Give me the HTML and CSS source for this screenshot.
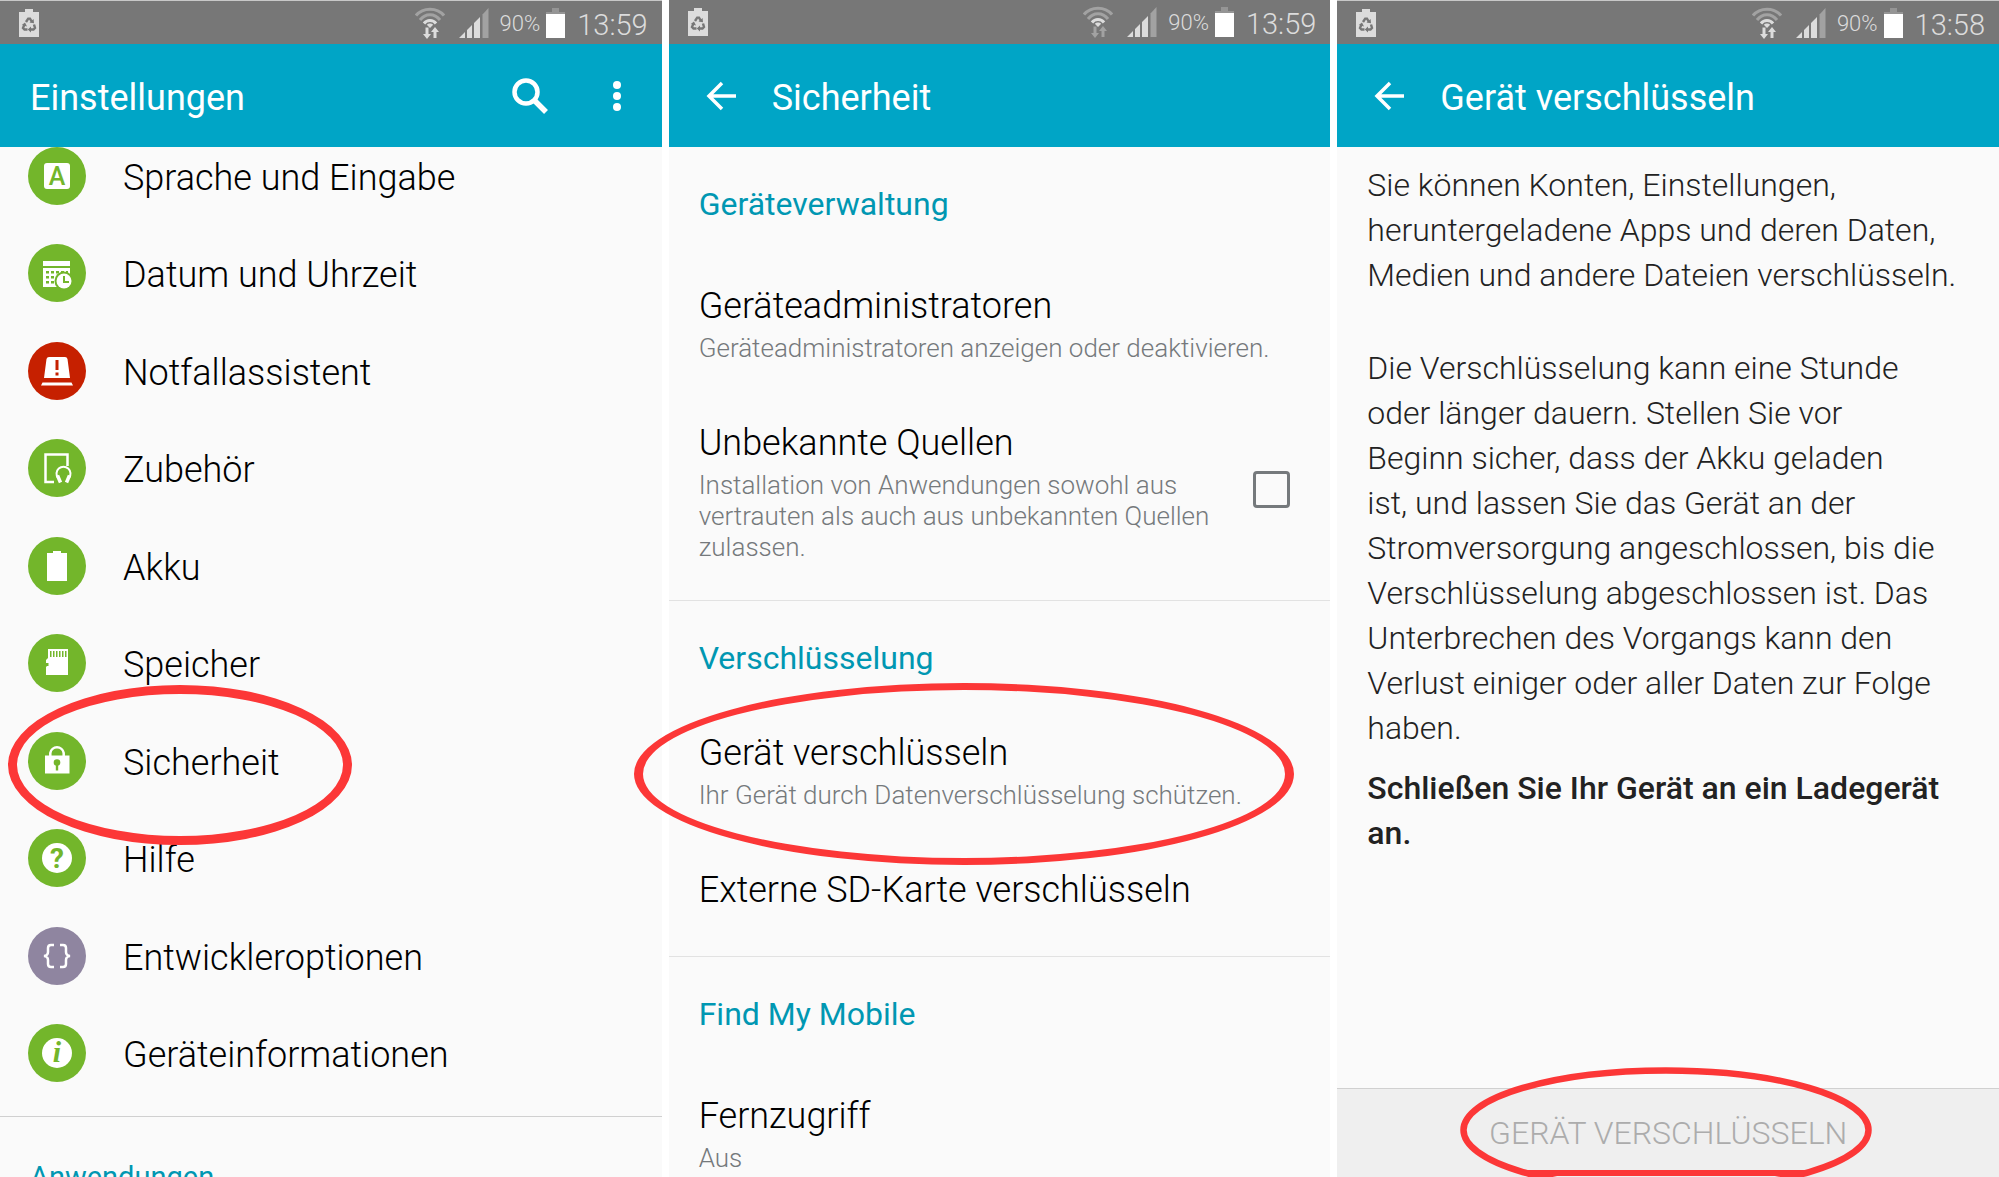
FILE: index.html
```html
<!DOCTYPE html>
<html lang="de">
<head>
<meta charset="utf-8">
<title>Gerät verschlüsseln</title>
<link rel="stylesheet" href="styles.css">
</head>
<body>
<svg class="sprite" aria-hidden="true">
  <symbol id="recycle" viewBox="0 0 20 28">
    <path fill="#dcdcdc" d="M0 3H6V0H14V3H20V28H0Z"/>
    <g fill="none" stroke="#777" stroke-width="2.4">
      <path d="M7 13 9.2 9.6H11L13 13"/>
      <path d="M15 15.5 16 19 14.5 20.5H11.5"/>
      <path d="M8.500 20.500H5.500L4 19 5.500 15.500"/>
    </g>
    <path fill="#777" d="M10.500 13.500 15 14.200 14.600 10ZM12 17.500V23.500L8.800 20.500ZM2.800 16 6 13.500 8 17.500Z"/>
  </symbol>
  <symbol id="wifi" viewBox="0 0 30 32">
    <g fill="none" stroke-width="3">
      <path stroke="#a2a2a2" d="M1 8.500C8 0 22 0 29 8.500M5 13C10.500 6 19.500 6 25 13"/>
      <path stroke="#dcdcdc" d="M9 16.500C12 12.500 18 12.500 21 16.500"/>
    </g>
    <path fill="#dcdcdc" d="M15 21 11.800 17.800C13.500 16 16.500 16 18.200 17.800Z"/>
    <path class="arrows" d="M10.500 20.500H13.500V27H16L12 32 8 27H10.500ZM18.500 31H21.500V25H24L20 20 16 25H18.500Z"/>
  </symbol>
  <symbol id="signal" viewBox="0 0 30 30">
    <path fill="#dcdcdc" d="M0 30 6 24V30ZM8 22 13 17V30H8ZM15 15 21 9V30H15Z"/>
    <path fill="#a2a2a2" d="M23.500 6.500 29.500 0V30H23.500Z"/>
  </symbol>
  <symbol id="battery" viewBox="0 0 19 30">
    <path fill="#959595" d="M0 4H6V0H13V4H19V6H0Z"/>
    <path fill="#fff" d="M0 6H19V30H0Z"/>
  </symbol>
  <symbol id="back" viewBox="0 0 30 30">
    <path fill="none" stroke="#fff" stroke-width="3.500" d="M30 15H3M16 2 3 15 16 28"/>
  </symbol>
</svg>

<main class="board">
  <section class="screen">
    <div class="status status-edge">
      <svg class="s-recycle"><use href="#recycle"/></svg>
      <svg class="s-wifi"><use href="#wifi"/></svg>
      <svg class="s-signal"><use href="#signal"/></svg>
      <span class="percent">90%</span>
      <svg class="s-battery"><use href="#battery"/></svg>
      <time class="clock">13:59</time>
    </div>
    <header class="bar">
      <h1 class="title">Einstellungen</h1>
      <button class="tool" aria-label="Suchen"><svg class="i-search" viewBox="0 0 36 36" fill="none" stroke="#fff"><circle cx="14" cy="14" r="11.500" stroke-width="4.500"/><path stroke-width="5.500" d="M22 22 34 34"/></svg></button>
      <button class="tool" aria-label="Mehr"><svg class="i-more" viewBox="0 0 8 32" fill="#fff"><circle cx="4" cy="5" r="4"/><circle cx="4" cy="16" r="4"/><circle cx="4" cy="27" r="4"/></svg></button>
    </header>
    <ul class="menu">
      <li><a class="entry" href="#sprache"><svg class="icon green" viewBox="0 0 58 58"><circle cx="29" cy="29" r="29"/><rect x="16" y="16" width="26" height="26" rx="3" fill="#fff"/><text class="glyph" x="29" y="38" font-size="25" font-weight="500">A</text></svg>Sprache und Eingabe</a></li>
      <li><a class="entry" href="#datum"><svg class="icon green" viewBox="0 0 58 58"><circle cx="29" cy="29" r="29"/><path fill="#fff" d="M15 17H42V22H15ZM15 24H42V43H15Z"/><path d="M18 27h3v2.500h-3zM23 27h3v2.500h-3zM28 27h3v2.500h-3zM33 27h3v2.500h-3zM38 27h2v2.500h-2zM18 32h3v2.500h-3zM23 32h3v2.500h-3zM18 37h3v2.500h-3zM23 37h3v2.500h-3z"/><circle cx="36" cy="37" r="9.500"/><circle cx="36" cy="37" r="7.500" fill="#fff"/><path d="M36 32V38H41" fill="none" stroke="#73b62b" stroke-width="2"/></svg>Datum und Uhrzeit</a></li>
      <li><a class="entry" href="#notfall"><svg class="icon red" viewBox="0 0 58 58"><circle cx="29" cy="29" r="29"/><path fill="#fff" d="M16 36 18.500 17Q19 15 21 15H37Q39 15 39.500 17L42 36ZM13 43.500 14.500 40.500H43.500L45 43.500Z"/><path d="M27.500 18H30.500V28H27.500ZM27.500 30.500H30.500V33.500H27.500Z"/></svg>Notfallassistent</a></li>
      <li><a class="entry" href="#zubehoer"><svg class="icon green" viewBox="0 0 58 58"><circle cx="29" cy="29" r="29"/><path fill="none" stroke="#fff" stroke-width="2.500" d="M26 43H17.500V15.500H39.500V27"/><path fill="none" stroke="#fff" stroke-width="2" d="M30 39A7 7 0 1 1 41 39"/><path fill="none" stroke="#fff" stroke-width="3.500" d="M29.500 36.500 32.500 43.500M41.500 36.500 38.500 43.500"/></svg>Zubehör</a></li>
      <li><a class="entry" href="#akku"><svg class="icon green" viewBox="0 0 58 58"><circle cx="29" cy="29" r="29"/><path fill="#fff" d="M19 16H25V14H33V16H39V44H19Z"/></svg>Akku</a></li>
      <li><a class="entry" href="#speicher"><svg class="icon green" viewBox="0 0 58 58"><circle cx="29" cy="29" r="29"/><path fill="#fff" d="M20 15H40V41H18V33L20 31 18 29V26L20 24Z"/><path d="M22 17h1.500v6H22zM25 17h1.500v6H25zM28 17h1.500v6H28zM31 17h1.500v6H31zM34 17h1.500v6H34zM37 17h1.500v6H37z"/><path d="M18 29H20.500V32H18Z"/></svg>Speicher</a></li>
      <li class="marked"><a class="entry" href="#sicherheit"><svg class="icon green" viewBox="0 0 58 58"><circle cx="29" cy="29" r="29"/><path fill="#fff" d="M17 23.500H41.500V41.500H17Z"/><path fill="none" stroke="#fff" stroke-width="2.500" d="M22.300 24V21A6.800 6.800 0 0 1 35.700 21V24"/><circle cx="29" cy="30.500" r="3.300"/><path d="M27.800 31H30.200V38.500H27.800Z"/></svg>Sicherheit</a><span class="ring ring-menu"></span></li>
      <li><a class="entry" href="#hilfe"><svg class="icon green" viewBox="0 0 58 58"><circle cx="29" cy="29" r="29"/><circle cx="29" cy="29" r="15" fill="#fff"/><text class="glyph" x="29" y="39" font-size="28" font-weight="700">?</text></svg>Hilfe</a></li>
      <li><a class="entry" href="#entwickler"><svg class="icon purple" viewBox="0 0 58 58"><circle cx="29" cy="29" r="29"/><path fill="none" stroke="#fff" stroke-width="2.500" d="M26 18H23Q20 18 20 21V25Q20 28.500 16 29Q20 29.500 20 33V37Q20 40 23 40H26M32 18H35Q38 18 38 21V25Q38 28.500 42 29Q38 29.500 38 33V37Q38 40 35 40H32"/></svg>Entwickleroptionen</a></li>
      <li><a class="entry" href="#info"><svg class="icon green" viewBox="0 0 58 58"><circle cx="29" cy="29" r="29"/><circle cx="29" cy="29" r="15" fill="#fff"/><text class="glyph glyph-info" x="29" y="38" font-size="30">i</text></svg>Geräteinformationen</a></li>
    </ul>
    <h2 class="heading heading-menu">Anwendungen</h2>
  </section>

  <section class="screen">
    <div class="status status-idle">
      <svg class="s-recycle"><use href="#recycle"/></svg>
      <svg class="s-wifi"><use href="#wifi"/></svg>
      <svg class="s-signal"><use href="#signal"/></svg>
      <span class="percent">90%</span>
      <svg class="s-battery"><use href="#battery"/></svg>
      <time class="clock">13:59</time>
    </div>
    <header class="bar">
      <button class="back" aria-label="Zurück"><svg class="i-back"><use href="#back"/></svg></button>
      <h1 class="title">Sicherheit</h1>
    </header>
    <div class="group">
      <h2 class="heading">Geräteverwaltung</h2>
      <a class="row" href="#admin"><span class="name">Geräteadministratoren</span><span class="summary">Geräteadministratoren anzeigen oder deaktivieren.</span></a>
      <label class="row row-check" for="unknown"><span class="row-text"><span class="name">Unbekannte Quellen</span><span class="summary">Installation von Anwendungen sowohl aus vertrauten als auch aus unbekannten Quellen zulassen.</span></span><input class="check" type="checkbox" id="unknown"></label>
    </div>
    <div class="group group-crypt">
      <h2 class="heading">Verschlüsselung</h2>
      <div class="marked"><a class="row" href="#crypt"><span class="name">Gerät verschlüsseln</span><span class="summary">Ihr Gerät durch Datenverschlüsselung schützen.</span></a><span class="ring ring-crypt"></span></div>
      <a class="row" href="#sd"><span class="name">Externe SD-Karte verschlüsseln</span></a>
    </div>
    <div class="group">
      <h2 class="heading">Find My Mobile</h2>
      <a class="row" href="#remote"><span class="name">Fernzugriff</span><span class="summary">Aus</span></a>
    </div>
  </section>

  <section class="screen">
    <div class="status status-edge">
      <svg class="s-recycle"><use href="#recycle"/></svg>
      <svg class="s-wifi"><use href="#wifi"/></svg>
      <svg class="s-signal"><use href="#signal"/></svg>
      <span class="percent">90%</span>
      <svg class="s-battery"><use href="#battery"/></svg>
      <time class="clock">13:58</time>
    </div>
    <header class="bar">
      <button class="back" aria-label="Zurück"><svg class="i-back"><use href="#back"/></svg></button>
      <h1 class="title">Gerät verschlüsseln</h1>
    </header>
    <div class="text">
      <p class="intro">Sie können Konten, Einstellungen,<br>heruntergeladene Apps und deren Daten,<br>Medien und andere Dateien verschlüsseln.</p>
      <p class="warning">Die Verschlüsselung kann eine Stunde<br>oder länger dauern. Stellen Sie vor<br>Beginn sicher, dass der Akku geladen<br>ist, und lassen Sie das Gerät an der<br>Stromversorgung angeschlossen, bis die<br>Verschlüsselung abgeschlossen ist. Das<br>Unterbrechen des Vorgangs kann den<br>Verlust einiger oder aller Daten zur Folge<br>haben.</p>
      <p class="plug">Schließen Sie Ihr Gerät an ein Ladegerät<br>an.</p>
    </div>
    <footer class="action marked">
      <button class="encrypt" disabled>GERÄT VERSCHLÜSSELN</button>
      <svg class="ring-action" viewBox="0 0 412 110" fill="none" stroke="#fc3737"><ellipse cx="206" cy="63" rx="202.500" ry="59.500" stroke-width="6.500"/><path stroke-width="6" d="M66 106H346"/></svg>
    </footer>
  </section>
</main>
</body>
</html>
```
FILE: styles.css
```css
* { box-sizing: border-box; }

body {
  margin: 0;
  background: #fff;
  color: #000;
  font-family: Roboto, "Liberation Sans", sans-serif;
}

h1, h2, p, ul { margin: 0; padding: 0; }
ul { list-style: none; }
a { color: inherit; text-decoration: none; }
button { padding: 0; border: 0; background: none; font-family: inherit; }
svg { display: block; flex: none; }

.sprite { position: absolute; width: 0; height: 0; }

.board {
  display: grid;
  grid-template-columns: repeat(3, minmax(0, 1fr));
  gap: 7px;
  height: 100vh;
  overflow: hidden;
}

.screen {
  display: flex;
  flex-direction: column;
  min-height: 0;
  background: #fafafa;
}
.screen > * { flex: none; }

/* status bar */
.status {
  display: flex;
  align-items: center;
  height: 44px;
  padding: 0 14px 0 19px;
  background: #777;
  color: #dcdcdc;
}
.status-edge { border-top: 1px solid #c8c8c8; }
.status-idle { --arrows: #a2a2a2; }
.s-recycle { width: 20px; height: 28px; margin-right: auto; }
.s-wifi { width: 30px; height: 32px; margin-right: 14px; }
.s-signal { width: 30px; height: 30px; margin-right: 11px; }
.s-battery { width: 19px; height: 30px; margin: 0 12px 0 6px; }
.arrows { fill: var(--arrows, #dcdcdc); }
.percent { padding-top: 2px; font-size: 22px; font-weight: 350; line-height: 26px; }
.clock { padding-top: 4px; font-size: 29px; font-weight: 350; line-height: 34px; }

/* title bar */
.bar {
  display: flex;
  align-items: center;
  height: 103px;
  padding: 0 32px 0 30px;
  background: #00a5c6;
  color: #fff;
}
.title { flex: 1; padding-top: 4px; font-size: 36px; font-weight: 400; line-height: 42px; }
.tool { display: grid; place-items: center; width: 52px; height: 52px; margin-left: 28px; }
.tool:last-child { width: 26px; margin: 0 0 0 48px; }
.i-search { width: 36px; height: 36px; }
.i-more { width: 8px; height: 32px; }
.back { margin: 0 36px 0 7px; }
.i-back { width: 30px; height: 30px; }

/* settings menu */
.menu {
  display: flex;
  flex-direction: column;
  justify-content: space-between;
  min-height: 970px;
  padding-bottom: 34px;
  border-bottom: 1px solid #d0d0d0;
}
.entry {
  display: flex;
  align-items: flex-end;
  gap: 37px;
  height: 58px;
  padding-left: 28px;
  font-size: 36px;
  font-weight: 350;
  line-height: 54px;
}
.icon { width: 58px; height: 58px; }
.green { fill: #73b62b; }
.red { fill: #c62000; }
.purple { fill: #8f85a0; }
.glyph { text-anchor: middle; }
.glyph-info { font-family: "Liberation Serif", serif; font-style: italic; font-weight: 700; }

/* preference groups */
.heading {
  padding: 39px 30px 34px;
  color: #0097b2;
  font-size: 32px;
  font-weight: 400;
  line-height: 36px;
}
.heading-menu { padding-top: 42px; font-size: 29px; }
.group { border-bottom: 1px solid #e2e2e2; padding-bottom: 8px; }
.group-crypt { padding-bottom: 16px; }
.group-crypt .heading { padding-bottom: 27px; }
.row { display: block; padding: 30px 30px 29px; }
.name { display: block; font-size: 36px; font-weight: 350; line-height: 41px; }
.summary {
  display: block;
  margin-top: 6px;
  color: #75797c;
  font-size: 26px;
  font-weight: 350;
  line-height: 31px;
}
.row-check { display: flex; align-items: flex-start; gap: 20px; padding-right: 40px; }
.row-text { flex: 1; }
.check {
  appearance: none;
  width: 37px;
  height: 37px;
  margin: 48px 0 0;
  border: 3px solid #75797c;
  border-radius: 4px;
}

/* encryption notice */
.text {
  padding: 16px 30px;
  color: #222;
  font-size: 32px;
  font-weight: 350;
  line-height: 45px;
}
.warning { margin-top: 48px; }
.plug { margin-top: 15px; font-weight: 500; }
.action {
  display: grid;
  place-items: center;
  height: 89px;
  margin-top: auto;
  border-top: 1px solid #d0d0d0;
  background: #efefef;
}
.encrypt { color: #acacac; font-size: 32px; font-weight: 350; }

/* red markers */
.marked { position: relative; }
.ring {
  position: absolute;
  border: 9px solid #fc3737;
  border-radius: 50%;
  pointer-events: none;
}
.ring-menu { left: 8px; top: -47px; width: 344px; height: 160px; }
.ring-crypt { left: -35px; top: -20px; width: 660px; height: 182px; border-width: 7px 9px; }
.ring-action { position: absolute; left: 50%; top: -22px; width: 412px; height: 110px; margin-left: -208px; }
```
